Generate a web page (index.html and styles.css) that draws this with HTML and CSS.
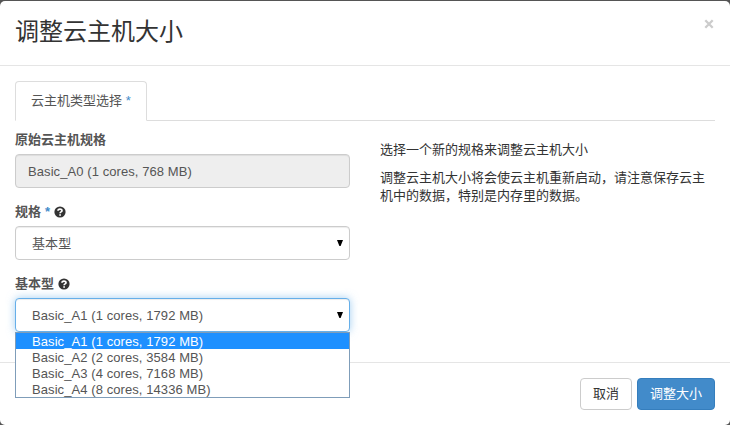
FILE: index.html
```
<!DOCTYPE html>
<html lang="zh-CN">
<head>
<meta charset="utf-8">
<title>调整云主机大小</title>
<link rel="stylesheet" href="styles.css">
</head>
<body>
<div class="modal">
  <header class="modal-header">
    <h3>调整云主机大小</h3>
    <button class="close" type="button" aria-label="关闭"><svg width="10" height="10" viewBox="0 0 10 10"><path d="M1.3 1.3 8.7 8.7M8.7 1.3 1.3 8.7"/></svg></button>
  </header>
  <main class="modal-body">
    <nav class="tabs"><a class="tab">云主机类型选择 <span class="req">*</span></a></nav>
    <div class="columns">
      <form class="fields">
        <div class="group">
          <label>原始云主机规格</label>
          <div class="control readonly">Basic_A0 (1 cores, 768 MB)</div>
        </div>
        <div class="group">
          <label>规格 <span class="req">*</span> <svg class="help" viewBox="0 0 12 12"><circle cx="6" cy="6" r="5.6"/><path d="M4 4.8C4 2.6 8 2.6 8 4.7 8 6 6.1 5.8 6.1 7.3M6.1 8.2V9.7"/></svg></label>
          <div class="control select">基本型<svg class="arrow" viewBox="0 0 6 6"><path d="M0 0H6L3.6 6H2.4Z"/></svg></div>
        </div>
        <div class="group">
          <label>基本型 <svg class="help" viewBox="0 0 12 12"><circle cx="6" cy="6" r="5.6"/><path d="M4 4.8C4 2.6 8 2.6 8 4.7 8 6 6.1 5.8 6.1 7.3M6.1 8.2V9.7"/></svg></label>
          <div class="control select focused">Basic_A1 (1 cores, 1792 MB)<svg class="arrow" viewBox="0 0 6 6"><path d="M0 0H6L3.6 6H2.4Z"/></svg></div>
          <ul class="options">
            <li class="active">Basic_A1 (1 cores, 1792 MB)</li>
            <li>Basic_A2 (2 cores, 3584 MB)</li>
            <li>Basic_A3 (4 cores, 7168 MB)</li>
            <li>Basic_A4 (8 cores, 14336 MB)</li>
          </ul>
        </div>
      </form>
      <section class="description">
        <p>选择一个新的规格来调整云主机大小</p>
        <p>调整云主机大小将会使云主机重新启动，请注意保存云主机中的数据，特别是内存里的数据。</p>
      </section>
    </div>
  </main>
  <footer class="modal-footer">
    <button class="btn" type="button">取消</button>
    <button class="btn primary" type="button">调整大小</button>
  </footer>
</div>
</body>
</html>
```
FILE: styles.css
```
* { box-sizing: border-box; }
body {
  margin: 0;
  padding-top: 1px;
  height: 425px;
  overflow: hidden;
  background: #555;
  color: #333;
  font: 13px/18px "Liberation Sans", "Noto Sans CJK SC", sans-serif;
}
.modal {
  display: flex;
  flex-direction: column;
  height: 424px;
  background: #fff;
  border-radius: 5px;
}
.modal-header {
  display: flex;
  justify-content: space-between;
  height: 65px;
  padding: 15px;
  border-bottom: 1px solid #e5e5e5;
}
h3 { margin: 0; font-size: 24px; line-height: 32px; font-weight: 400; }
.close { width: 10px; height: 10px; margin: 3px 1px 0 0; padding: 0; border: 0; background: none; }
.close svg { display: block; fill: none; stroke: #ccc; stroke-width: 2.3; }
.modal-body { height: 296px; padding: 15px 15px 0; }
.tabs { display: flex; height: 40px; border-bottom: 1px solid #ddd; }
.tab {
  height: 40px;
  width: 132px;
  padding: 10px 0 0 15px;
  border: 1px solid #ddd;
  border-bottom-color: #fff;
  border-radius: 4px 4px 0 0;
  background: #fff;
  color: #555;
  white-space: nowrap;
}
.req { color: #428bca; }
.columns { display: flex; gap: 30px; }
.fields { width: 335px; padding-top: 10px; }
.group { position: relative; height: 72px; }
label { display: flex; align-items: center; gap: 4px; height: 18px; margin-bottom: 5px; color: #555; font-weight: 700; }
.help { width: 12px; height: 12px; fill: #333; }
.help path { fill: none; stroke: #fff; stroke-width: 1.7; }
.control {
  display: flex;
  align-items: center;
  height: 34px;
  padding: 1px 12px 0;
  border: 1px solid #ccc;
  border-radius: 4px;
  background: #fff;
  box-shadow: inset 0 1px 1px rgba(0,0,0,.075);
  color: #555;
  letter-spacing: .08px;
}
.readonly { background: #eee; }
.select { justify-content: space-between; padding: 1px 6px 0 16px; }
.arrow { width: 6px; height: 6px; margin-bottom: 1px; fill: #000; }
.focused { border-color: #66afe9; box-shadow: inset 0 1px 1px rgba(0,0,0,.075), 0 0 8px rgba(102,175,233,.6); }
.options {
  position: absolute;
  top: 57px;
  left: 0;
  width: 335px;
  margin: 0;
  padding: 0;
  border: 1px solid #7f9db9;
  background: #fff;
  color: #555;
  list-style: none;
  letter-spacing: .08px;
}
.options li { height: 16px; padding-left: 16px; line-height: 17px; }
.options .active { background: #1e90ff; color: #fff; }
.description { width: 335px; padding-top: 20px; }
.description p { margin: 0 0 10px; }
.modal-footer { display: flex; justify-content: flex-end; gap: 5px; padding: 15px; border-top: 1px solid #e5e5e5; }
.btn {
  height: 32px;
  padding: 0 12px;
  border: 1px solid #ccc;
  border-radius: 4px;
  background: #fff;
  color: #333;
  font: 13px/18px "Liberation Sans", "Noto Sans CJK SC", sans-serif;
}
.primary { border-color: #357ebd; background: #428bca; color: #fff; }
```
